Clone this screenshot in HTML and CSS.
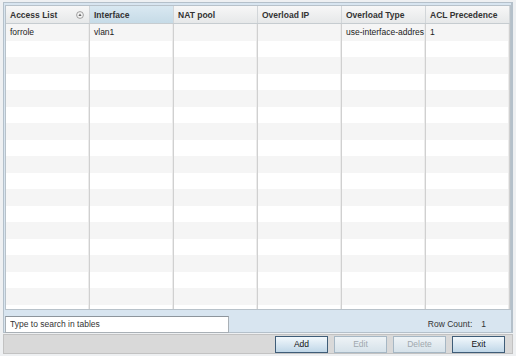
FILE: index.html
```html
<!DOCTYPE html>
<html lang="en">
<head>
    <meta charset="utf-8"/>
    <title>NAT Policy</title>
    <link rel="stylesheet" href="styles.css">
</head>
<body>
    <div class="panel">
        <div class="grid">
            <div class="head">
                <div class="hcell">Access List
                    <svg class="sort" width="8" height="8" viewBox="0 0 8 8">
                        <circle cx="4" cy="4" r="3.4" fill="#f4f4f4" stroke="#8a8a8a" stroke-width="0.8"/>
                        <path d="M2.4 5 L4 2.6 L5.6 5 Z" fill="#6a6a6a"/>
                    </svg>
                </div>
                <div class="hcell active">Interface</div>
                <div class="hcell">NAT pool</div>
                <div class="hcell">Overload IP</div>
                <div class="hcell">Overload Type</div>
                <div class="hcell">ACL Precedence</div>
            </div>
            <div class="body" id="rows">
                <div class="row">
                    <div class="cell">forrole</div>
                    <div class="cell">vlan1</div>
                    <div class="cell"></div>
                    <div class="cell"></div>
                    <div class="cell">use-interface-addres</div>
                    <div class="cell">1</div>
                </div>
            </div>
        </div>
        <div class="tools">
            <input class="search" type="text" value="Type to search in tables">
            <div class="count"><span>Row Count:</span><span class="num">1</span></div>
        </div>
    </div>
    <div class="bar">
        <button class="btn">Add</button>
        <button class="btn" disabled>Edit</button>
        <button class="btn" disabled>Delete</button>
        <button class="btn">Exit</button>
    </div>
    <script>
        var rows = document.getElementById('rows');
        for (var i = 0; i < 17; i++) {
            var r = document.createElement('div');
            r.className = 'row';
            for (var j = 0; j < 6; j++) {
                var c = document.createElement('div');
                c.className = 'cell';
                r.appendChild(c);
            }
            rows.appendChild(r);
        }
    </script>
</body>
</html>
```

FILE: styles.css
```css
body
{
    margin: 0;
    background-color: #eef0f2;
    font-family: "Liberation Sans", Arial, sans-serif;
    font-size: 8.5px;
    color: #222;
}

.panel
{
    margin: 2px 3px 0 3px;
    height: 331px;
    border: 1px solid #b4c0ca;
    border-right-width: 2px;
    background-color: #d8e5f0;
    padding: 2px 1px 0 1px;
    box-sizing: border-box;
}

.grid
{
    width: 506px;
    height: 305px;
    border: 1px solid #b8c2ca;
    background-color: #fff;
    overflow: hidden;
    box-sizing: border-box;
}

.head
{
    display: grid;
    grid-template-columns: repeat(6, 84px);
    height: 17px;
    border-bottom: 1px solid #c6ccd0;
    background: linear-gradient(#f7f7f7, #e6e8e9);
}

.hcell
{
    display: flex;
    align-items: center;
    justify-content: space-between;
    padding: 0 5px 0 4px;
    font-weight: bold;
    color: #333;
    border-right: 1px solid #d2d6d9;
    white-space: nowrap;
    overflow: hidden;
}

.hcell.active
{
    background: linear-gradient(#d9e8f1, #c6dbe7);
}

.sort
{
    display: block;
}

.row
{
    display: grid;
    grid-template-columns: repeat(6, 84px);
    height: 16.5px;
}

.row:nth-child(odd)
{
    background-color: #f5f5f5;
}

.cell
{
    display: flex;
    align-items: center;
    padding: 0 4px;
    white-space: nowrap;
    overflow: hidden;
    border-right: 1px solid #d0d0d0;
    box-shadow: inset -1px 0 0 #ececec;
}

.tools
{
    display: flex;
    align-items: center;
    justify-content: space-between;
    height: 24px;
    padding-top: 2px;
}

.search
{
    width: 224px;
    height: 17px;
    margin: 0;
    padding: 0 4px;
    box-sizing: border-box;
    border: 1px solid #a9b0b6;
    border-top-color: #8d959c;
    font-family: "Liberation Sans", Arial, sans-serif;
    font-size: 8.5px;
    color: #333;
    background-color: #fff;
}

.count
{
    display: flex;
    gap: 9px;
    margin-right: 24px;
    color: #333;
}

.bar
{
    display: flex;
    justify-content: flex-end;
    align-items: center;
    gap: 6px;
    margin: 1px 3px 0 3px;
    height: 20px;
    padding-right: 7px;
    background-color: #d9d9d9;
    border: 1px solid #c2c2c2;
    box-sizing: border-box;
}

.btn
{
    width: 53px;
    height: 17px;
    padding: 0;
    font-family: "Liberation Sans", Arial, sans-serif;
    font-size: 8.5px;
    color: #111;
    border: 1px solid #3f5d78;
    background: linear-gradient(#f2f8fc, #c0d7e8);
}

.btn:disabled
{
    color: #a0a8ae;
    border-color: #a6b7c4;
    background: linear-gradient(#eef3f6, #d6e2ea);
}
```
